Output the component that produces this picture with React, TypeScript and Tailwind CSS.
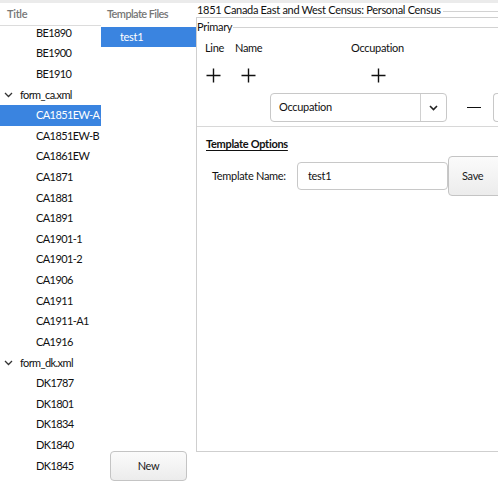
import type { ReactNode } from "react";

type TreeRow = { label: string; group?: boolean; selected?: boolean };

const rows: TreeRow[] = [
  { label: "BE1890" },
  { label: "BE1900" },
  { label: "BE1910" },
  { label: "form_ca.xml", group: true },
  { label: "CA1851EW-A", selected: true },
  { label: "CA1851EW-B" },
  { label: "CA1861EW" },
  { label: "CA1871" },
  { label: "CA1881" },
  { label: "CA1891" },
  { label: "CA1901-1" },
  { label: "CA1901-2" },
  { label: "CA1906" },
  { label: "CA1911" },
  { label: "CA1911-A1" },
  { label: "CA1916" },
  { label: "form_dk.xml", group: true },
  { label: "DK1787" },
  { label: "DK1801" },
  { label: "DK1834" },
  { label: "DK1840" },
  { label: "DK1845" },
];

function Chevron() {
  return (
    <svg width="9" height="6" viewBox="0 0 9 6" className="shrink-0">
      <path d="M1 1l3.5 3.5L8 1" fill="none" stroke="#333" strokeWidth="1.3" />
    </svg>
  );
}

function Plus() {
  return (
    <svg width="15" height="15" viewBox="0 0 15 15">
      <path d="M7.5 0.5v14M0.5 7.5h14" stroke="#111" strokeWidth="1.4" />
    </svg>
  );
}

function GreyButton({ children, className }: { children: ReactNode; className: string }) {
  return (
    <div
      className={`flex items-center rounded-[4px] border border-[#c4c4c4] bg-gradient-to-b from-[#fbfbfb] to-[#ececec] text-[#1a1a1a] ${className}`}
    >
      {children}
    </div>
  );
}

export default function App() {
  return (
    <div
      className="flex h-[500px] w-[498px] flex-col overflow-hidden bg-white text-[11px] tracking-[-0.3px] text-[#111]"
      style={{ fontFamily: '"Segoe UI", Lato, sans-serif' }}
    >
      <div className="h-[3px] shrink-0 bg-[#ebebeb]" />

      <div className="flex min-h-0 flex-1">
        {/* tree of forms */}
        <div className="flex w-[101px] shrink-0 flex-col">
          <div className="flex h-[23px] shrink-0 items-center border-b border-[#dcdcdc] pl-[7px] font-semibold text-[#777]">
            Title
          </div>
          <div className="min-h-0 flex-1 overflow-hidden tracking-[-0.6px]">
            <div className="-mt-[3.3px]">
              {rows.map((row) => (
                <div
                  key={row.label}
                  className={`flex h-[20.62px] items-center whitespace-nowrap ${
                    row.group ? "gap-[7px] pl-[4px]" : "pl-[36px]"
                  } ${row.selected ? "bg-[#3a84e0] text-white" : ""}`}
                >
                  {row.group ? <Chevron /> : null}
                  {row.label}
                </div>
              ))}
            </div>
          </div>
        </div>

        {/* template files */}
        <div className="flex w-[95px] shrink-0 flex-col">
          <div className="flex h-[22px] shrink-0 items-center whitespace-nowrap pl-[6px] font-semibold tracking-[-0.6px] text-[#777]">
            Template Files
          </div>
          <div className="mt-[2px] flex h-[20px] items-center bg-[#3a84e0] pl-[19px] text-white">
            test1
          </div>
          <div className="flex-1" />
          <GreyButton className="mb-[19px] ml-[9px] h-[30px] w-[77px] justify-center">New</GreyButton>
        </div>

        {/* census form */}
        <div className="flex min-w-0 flex-1 flex-col">
          <div className="flex h-[14px] shrink-0 items-center gap-[2px] whitespace-nowrap pl-[1px]">
            <span>1851 Canada East and West Census: Personal Census</span>
            <div className="mt-[2px] h-px flex-1 bg-[#d2d2d2]" />
          </div>

          <div className="flex h-[435px] shrink-0 flex-col border-l border-t border-b border-[#cfcfcf]">
            <div className="flex h-[109px] shrink-0 flex-col border-b border-[#d8d8d8]">
              <div className="flex h-[18px] items-center gap-[1px]">
                <span>Primary</span>
                <div className="mt-[1px] h-px flex-1 bg-[#d2d2d2]" />
              </div>
              <div className="flex h-[24px] items-center pl-[8px]">
                <span className="w-[30px]">Line</span>
                <span className="w-[116px]">Name</span>
                <span>Occupation</span>
              </div>
              <div className="mt-[4px] flex h-[22px] items-center pl-[9px]">
                <Plus />
                <div className="ml-[20px]">
                  <Plus />
                </div>
                <div className="ml-[115px]">
                  <Plus />
                </div>
              </div>
              <div className="mt-[7px] flex h-[29px] items-center pl-[73px]">
                <div className="flex h-[29px] w-[177px] shrink-0 items-stretch rounded-[4px] border border-[#c8c8c8] bg-white">
                  <span className="flex flex-1 items-center pl-[8px]">Occupation</span>
                  <span className="flex w-[26px] items-center justify-center border-l border-[#d0d0d0]">
                    <svg width="9" height="6" viewBox="0 0 9 6">
                      <path d="M1 1l3.5 3.5L8 1" fill="none" stroke="#222" strokeWidth="1.6" />
                    </svg>
                  </span>
                </div>
                <div className="ml-[20px] h-[1.5px] w-[14px] shrink-0 bg-[#111]" />
                <div className="ml-[12px] h-[29px] w-[20px] shrink-0 rounded-l-[4px] border border-r-0 border-[#c8c8c8]" />
              </div>
            </div>

            <div className="mt-[7px] flex h-[20px] items-center pl-[9px] font-bold underline underline-offset-2">
              Template Options
            </div>
            <div className="mt-[2px] flex h-[40px] items-center pl-[15px]">
              <span className="w-[85px] shrink-0 whitespace-nowrap">Template Name:</span>
              <div className="flex h-[28px] w-[151px] shrink-0 items-center rounded-[4px] border border-[#c8c8c8] bg-white pl-[10px]">
                test1
              </div>
              <GreyButton className="h-[40px] w-[58px] shrink-0 pl-[13px]">Save</GreyButton>
            </div>
          </div>
        </div>
      </div>
    </div>
  );
}
